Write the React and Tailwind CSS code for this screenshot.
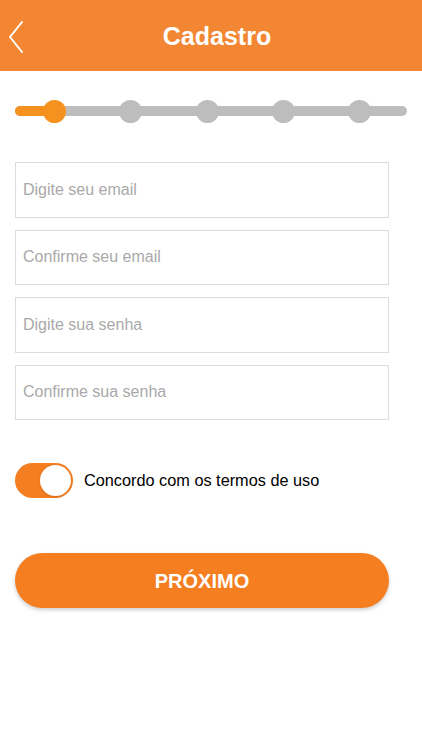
import React, { useState } from "react";

const fields = [
  "Digite seu email",
  "Confirme seu email",
  "Digite sua senha",
  "Confirme sua senha",
];

function Stepper({ step = 0, total = 5 }) {
  return (
    <div className="relative mx-[15px] mt-[28px] h-[24px] flex items-center">
      <div className="absolute inset-x-0 h-[10px] rounded-full bg-[#bdbdbd]" />
      <div className="absolute left-0 h-[10px] w-[40px] rounded-full bg-[#f5911e]" />
      <div className="relative flex w-full justify-between pl-[28px] pr-[36px]">
        {Array.from({ length: total }).map((_, i) => (
          <div
            key={i}
            className={`h-[23px] w-[23px] rounded-full ${i === step ? "bg-[#f5911e]" : "bg-[#bdbdbd]"}`}
          />
        ))}
      </div>
    </div>
  );
}

export default function App() {
  const [agreed, setAgreed] = useState(true);

  return (
    <div className="min-h-[750px] w-full bg-white font-['Liberation_Sans',Arial,sans-serif]">
      <header className="relative flex h-[71px] items-center justify-center bg-[#f28632]">
        <button className="absolute left-[4px] top-[17px] p-1" aria-label="Voltar">
          <svg width="16" height="32" viewBox="0 0 16 32" fill="none">
            <path d="M14 1 L2 16 L14 31" stroke="white" strokeWidth="2" strokeLinecap="round" strokeLinejoin="round" />
          </svg>
        </button>
        <h1 className="ml-[12px] mt-[3px] text-[25px] font-bold text-white">Cadastro</h1>
      </header>

      <Stepper />

      <div className="mx-[15px] mt-[39px] flex w-[374px] flex-col gap-[12px]">
        {fields.map((f) => (
          <input
            key={f}
            placeholder={f}
            type={f.includes("senha") ? "password" : "email"}
            className="h-[55.5px] w-full border border-[#dcdcdc] px-[7px] text-[16px] text-[#333] placeholder:text-[#a9a9a9] outline-none"
          />
        ))}
      </div>

      <div className="mx-[15px] mt-[43px] flex items-center gap-[11px]">
        <button
          onClick={() => setAgreed(!agreed)}
          className={`flex h-[35px] w-[58px] items-center rounded-full p-[2px] ${agreed ? "justify-end bg-[#f47e20]" : "justify-start bg-[#e5e5e5]"}`}
        >
          <span className="h-[31px] w-[31px] rounded-full bg-white shadow" />
        </button>
        <span className="text-[16.3px] text-black">Concordo com os termos de uso</span>
      </div>

      <button className="mx-[15px] mt-[55px] flex h-[55px] w-[374px] items-center justify-center rounded-full bg-[#f47e20] text-[20px] font-bold text-white shadow-[0_2px_4px_rgba(0,0,0,0.2)]">
        PRÓXIMO
      </button>
    </div>
  );
}
